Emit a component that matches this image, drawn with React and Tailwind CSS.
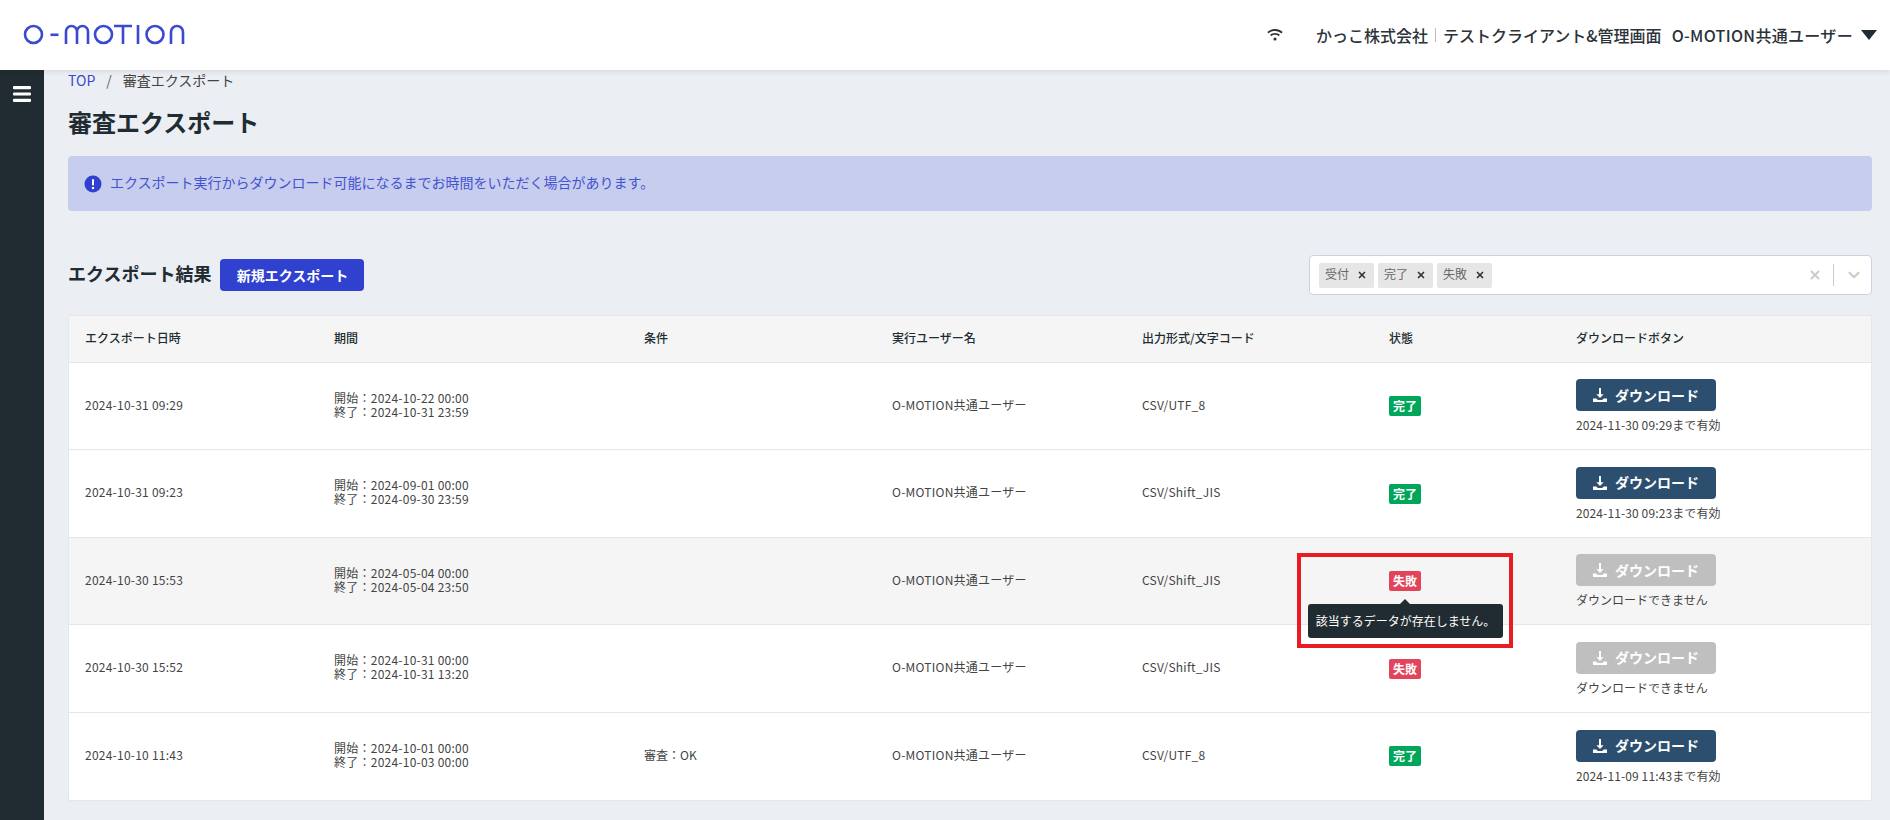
import React from "react";
import { X, ChevronDown } from "lucide-react";

const rows = [
  { d: "2024-10-31 09:29", s: "2024-10-22 00:00", e: "2024-10-31 23:59", c: "", f: "CSV/UTF_8", ok: true, note: "2024-11-30 09:29まで有効" },
  { d: "2024-10-31 09:23", s: "2024-09-01 00:00", e: "2024-09-30 23:59", c: "", f: "CSV/Shift_JIS", ok: true, note: "2024-11-30 09:23まで有効" },
  { d: "2024-10-30 15:53", s: "2024-05-04 00:00", e: "2024-05-04 23:50", c: "", f: "CSV/Shift_JIS", ok: false, note: "ダウンロードできません", hover: true, tip: true },
  { d: "2024-10-30 15:52", s: "2024-10-31 00:00", e: "2024-10-31 13:20", c: "", f: "CSV/Shift_JIS", ok: false, note: "ダウンロードできません" },
  { d: "2024-10-10 11:43", s: "2024-10-01 00:00", e: "2024-10-03 00:00", c: "審査：OK", f: "CSV/UTF_8", ok: true, note: "2024-11-09 11:43まで有効" },
];

function Logo() {
  return (
    <svg width="162" height="22" viewBox="0 0 162 22" fill="none" stroke="#3a49d0" strokeWidth="2.6">
      <circle cx="10.5" cy="10.500" r="8.500" />
      <path d="M27.500 10.800h8" />
      <path d="M43 20V7.500a5.500 5.500 0 0 1 11 0V20M54 7.500a5.500 5.500 0 0 1 11 0V20" />
      <circle cx="80.500" cy="10.500" r="8.500" />
      <path d="M91 2h18M100 2v18" />
      <path d="M115 1v19" />
      <circle cx="132" cy="10.500" r="8.500" />
      <path d="M148 20V8a6 6 0 0 1 12 0v12" />
    </svg>
  );
}

function DownloadIcon() {
  return (
    <svg width="14" height="14" viewBox="0 0 14 14" fill="currentColor">
      <path d="M6 0h2v6.200h2.600L7 10 3.400 6.200H6z" />
      <path d="M0 10.500h3.200L5 12h4l1.800-1.500H14V14H0z" />
    </svg>
  );
}

function Chip({ label }) {
  return (
    <span className="flex h-[25px] w-[55px] items-center justify-between rounded-[2px] bg-[#e6e6e6] pl-[6px] pr-[7px] text-[12px] text-[#666]">
      <span className="pb-[2px]">{label}</span>
      <X size={10} strokeWidth={4} className="text-[#333]" />
    </span>
  );
}

export default function App() {
  return (
    <div className="flex h-[820px] flex-col overflow-hidden bg-[#ebeef3] text-[#212c32] font-['Noto_Sans_CJK_JP',sans-serif]">
      <header className="relative z-10 flex h-[70px] shrink-0 items-center justify-between bg-white pl-[23px] pr-[13px] shadow-[0_1px_6px_rgba(0,0,0,0.1)]">
        <Logo />
        <div className="flex items-center text-[16px] font-medium text-[#2b3238]">
          <svg width="16" height="12" viewBox="0 0 16 12" fill="#2b3238" className="mr-[33px]">
            <path d="M8 0C5 0 2.300 1.100.3 3l1.300 1.400C3.300 2.800 5.500 1.900 8 1.900s4.700.9 6.400 2.500L15.700 3C13.700 1.100 11 0 8 0z" />
            <path d="M8 3.900c-1.900 0-3.600.7-4.900 1.900l1.300 1.400c.9-.9 2.200-1.400 3.600-1.400s2.700.5 3.600 1.400l1.300-1.400C11.600 4.600 9.900 3.900 8 3.900z" />
            <circle cx="8" cy="10" r="1.600" />
          </svg>
          <span>かっこ株式会社</span>
          <span className="mx-[7px] h-[14px] w-px bg-[#bbb]" />
          <span>テストクライアント&amp;管理画面</span>
          <span className="ml-[10px] tracking-[0.02em]">O-MOTION共通ユーザー</span>
          <svg width="16" height="10" viewBox="0 0 16 10" fill="#212c32" className="ml-[8px]">
            <path d="M0 0h16L8 10z" />
          </svg>
        </div>
      </header>
      <div className="flex min-h-0 flex-1">
        <aside className="w-[44px] shrink-0 bg-[#212c32] pl-[13px] pt-[16px]">
          <svg width="18" height="16" viewBox="0 0 18 16" fill="#fff">
            <rect y="0" width="18" height="3.200" rx="1" />
            <rect y="6.400" width="18" height="3.200" rx="1" />
            <rect y="12.800" width="18" height="3.200" rx="1" />
          </svg>
        </aside>
        <main className="relative min-w-0 flex-1 pl-[24px] pr-[18px]">
          <nav className="flex h-[20px] items-center text-[14px]">
            <span className="text-[#3a49d0]">TOP</span>
            <span className="mx-[11px] text-[#666]">/</span>
            <span className="text-[#444]">審査エクスポート</span>
          </nav>
          <h1 className="mt-[18px] text-[24px] font-bold leading-[28px]">審査エクスポート</h1>
          <div className="mt-[20px] flex h-[55px] items-center rounded-[4px] bg-[#c7cdec] pl-[16px] text-[14px] text-[#4453d4]">
            <svg width="18" height="18" viewBox="0 0 18 18" className="mr-[8px]">
              <circle cx="9" cy="9" r="8.500" fill="#3040cf" />
              <rect x="8" y="4" width="2" height="6.500" rx="1" fill="#fff" />
              <circle cx="9" cy="13" r="1.200" fill="#fff" />
            </svg>
            <span className="pb-[3px]">エクスポート実行からダウンロード可能になるまでお時間をいただく場合があります。</span>
          </div>
          <div className="mt-[44px] flex h-[40px] items-center justify-between">
            <div className="flex items-center">
              <h2 className="pb-[4px] text-[18px] font-bold">エクスポート結果</h2>
              <button className="ml-[9px] h-[32px] w-[144px] rounded-[4px] bg-[#3040cf] text-[14px] font-bold text-white">新規エクスポート</button>
            </div>
            <div className="flex h-[40px] w-[563px] items-center rounded-[4px] border border-[#cdd2de] bg-white pl-[9px] pr-[8px]">
              <div className="flex flex-1 gap-[4px]">
                <Chip label="受付" />
                <Chip label="完了" />
                <Chip label="失敗" />
              </div>
              <X size={14} strokeWidth={3.500} className="text-[#ccc]" />
              <span className="mx-[11px] h-[22px] w-px bg-[#ccc]" />
              <ChevronDown size={18} strokeWidth={3} className="text-[#ccc]" />
            </div>
          </div>
          <div className="mt-[20px] rounded-[2px] border border-[#e4e6ea] bg-white">
            <table className="w-full table-fixed border-collapse text-left text-[12px]">
              <colgroup>
                <col className="w-[249px]" />
                <col className="w-[310px]" />
                <col className="w-[248px]" />
                <col className="w-[250px]" />
                <col className="w-[247px]" />
                <col className="w-[187px]" />
                <col />
              </colgroup>
              <thead>
                <tr className="h-[46px] border-b border-[#e4e6ea] bg-[#f5f5f5]">
                  {["エクスポート日時", "期間", "条件", "実行ユーザー名", "出力形式/文字コード", "状態", "ダウンロードボタン"].map((t) => (
                    <th key={t} className="pb-[2px] pl-[16px] font-medium">{t}</th>
                  ))}
                </tr>
              </thead>
              <tbody className="text-[#444]">
                {rows.map((r) => (
                  <tr key={r.d} className={"h-[87.5px] border-b border-[#e4e6ea] last:border-b-0 " + (r.hover ? "bg-[#f5f5f5]" : "")}>
                    <td className="pb-[2px] pl-[16px] tracking-[0.02em]">{r.d}</td>
                    <td className="pb-[2px] pl-[16px] leading-[14px] tracking-[0.02em]">
                      <div>開始：{r.s}</div>
                      <div>終了：{r.e}</div>
                    </td>
                    <td className="pb-[2px] pl-[16px]">{r.c}</td>
                    <td className="pb-[2px] pl-[16px] tracking-[0.02em]">O-MOTION共通ユーザー</td>
                    <td className="pb-[2px] pl-[16px] tracking-[0.02em]">{r.f}</td>
                    <td className="pl-[16px]">
                      <span className="relative inline-flex align-middle">
                        <span className={"inline-flex h-[20px] w-[32px] items-center justify-center rounded-[2px] text-[12px] font-bold text-white " + (r.ok ? "bg-[#00a65a]" : "bg-[#e2445c]")}>
                          {r.ok ? "完了" : "失敗"}
                        </span>
                        {r.tip && (
                          <span className="absolute left-[-81px] top-[33px] z-20 flex h-[34px] w-[195px] items-center justify-center rounded-[3px] bg-[#212c32] text-[12px] text-white">
                            <span className="absolute left-[92px] top-[-5px] h-0 w-0 border-x-[5px] border-b-[5px] border-x-transparent border-b-[#212c32]" />
                            該当するデータが存在しません。
                          </span>
                        )}
                      </span>
                    </td>
                    <td className="pl-[16px] pt-[2px]">
                      <button className={"flex h-[32px] w-[140px] items-center justify-center gap-[8px] rounded-[4px] text-[14px] font-bold text-white " + (r.ok ? "bg-[#2c4f70]" : "bg-[#bfbfbf]")}>
                        <DownloadIcon />
                        ダウンロード
                      </button>
                      <div className={"mt-[5px] text-[#444] " + (r.ok ? "tracking-[0.01em]" : "")}>{r.note}</div>
                    </td>
                  </tr>
                ))}
              </tbody>
            </table>
          </div>
          <div className="pointer-events-none absolute left-[1253px] top-[483px] z-30 h-[95px] w-[216px] border-[4px] border-[#e91c24]" />
        </main>
      </div>
    </div>
  );
}
